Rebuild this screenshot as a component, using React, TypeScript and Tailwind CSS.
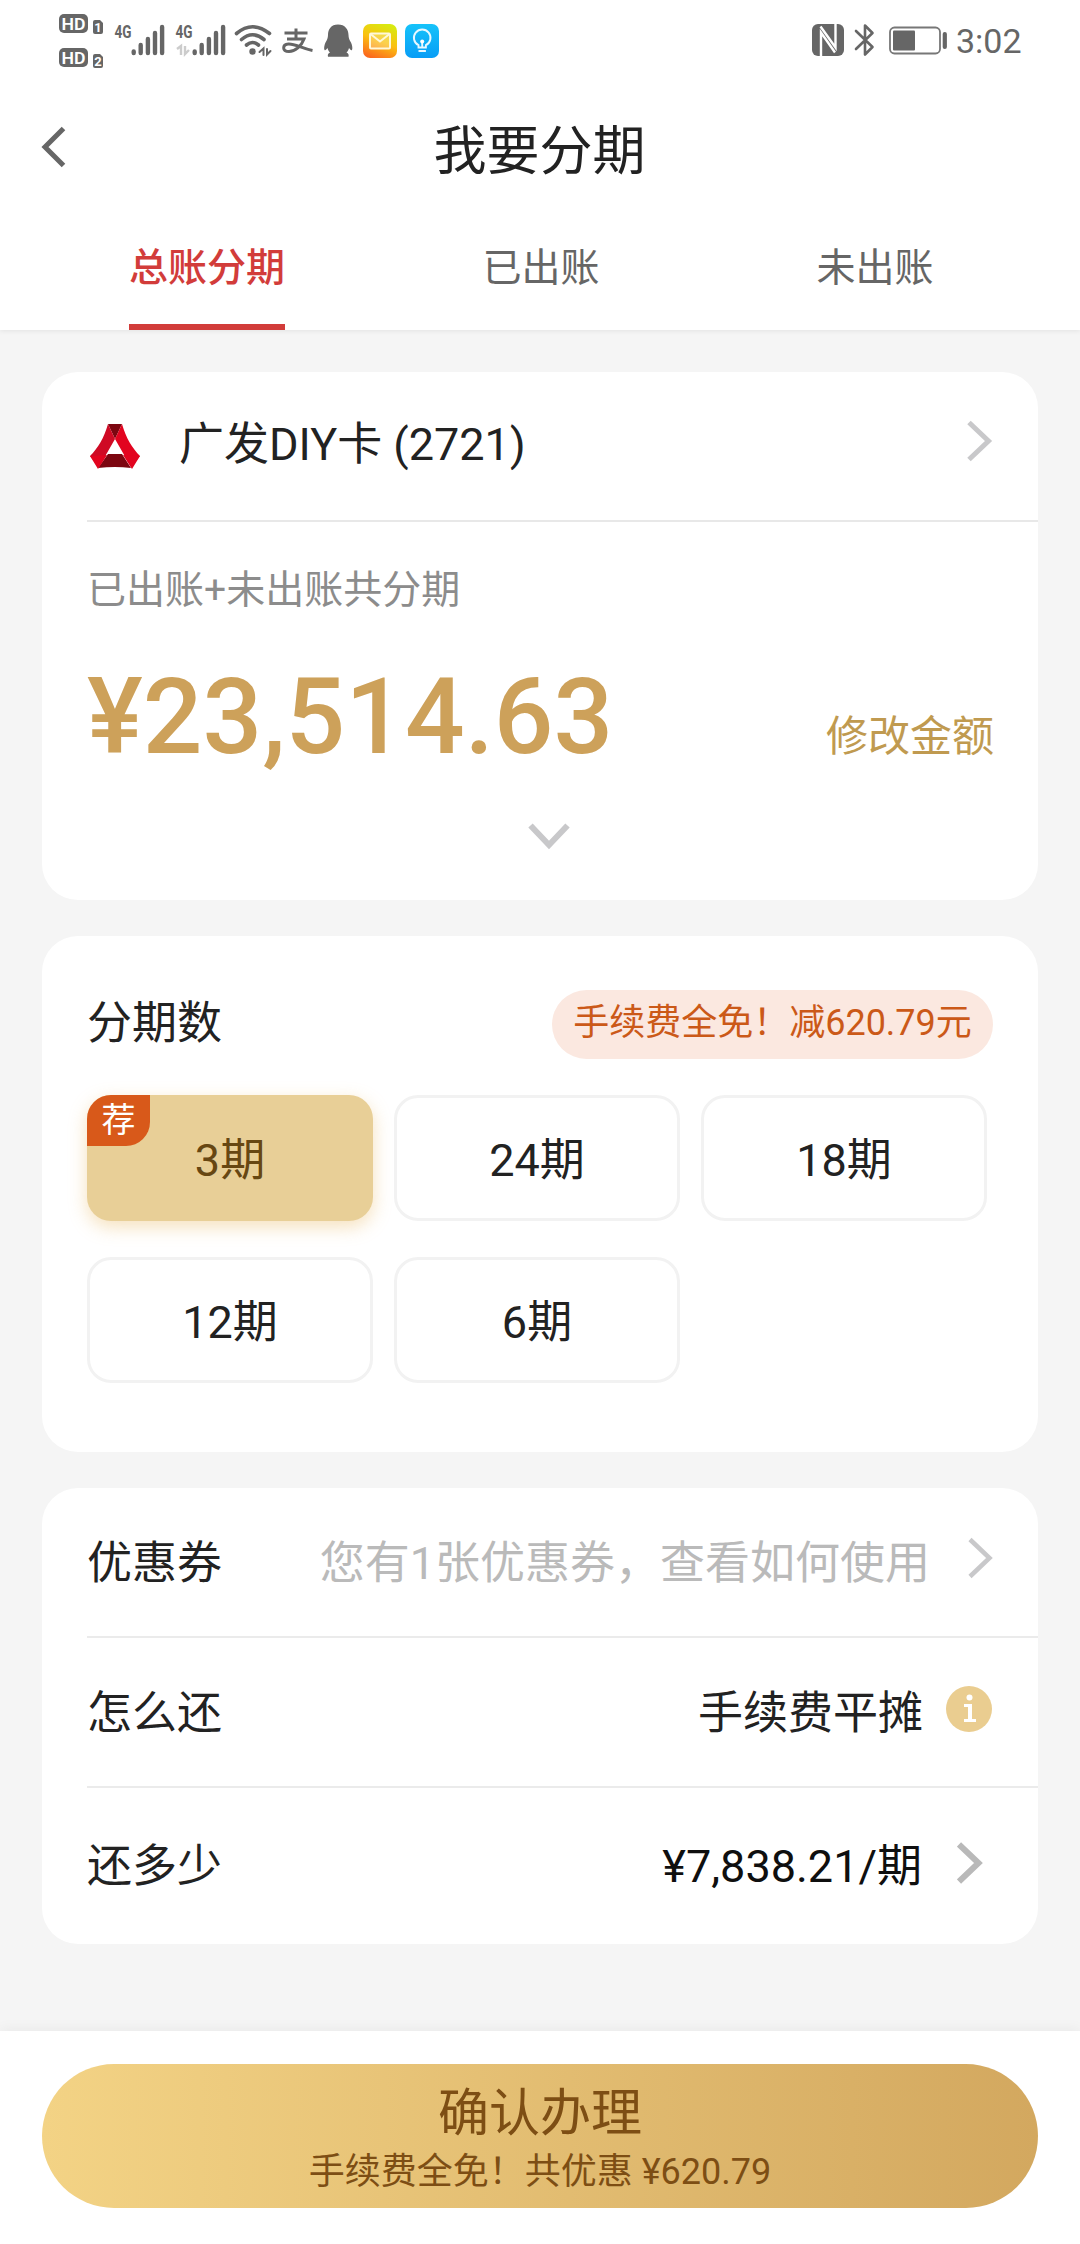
import React, { useState } from "react";

const tabs = ["总账分期", "已出账", "未出账"];
const periods = [3, 24, 18, 12, 6];

const Bars = ({ x }: any) => (
  <g stroke="#666" strokeWidth="4.4" strokeLinecap="round">
    <path d={`M${x} 51.500v1.500M${x + 7} 45v8M${x + 14.2} 39v14M${x + 21.3} 33v20M${x + 28.4} 27v26`} />
  </g>
);

const HdIcon = () => (
  <svg viewBox="56 0 54 80" className="w-[54px] h-20" fill="#666">
    {[14, 48].map((y, i) => (
      <g key={y}>
        <rect x="59" y={y} width="29" height="19" rx="5" />
        <text x="61.5" y={y + 15.8} fill="#fff" fontSize="17" fontWeight="600" textLength="24" lengthAdjust="spacingAndGlyphs">HD</text>
        <path d={`M93 ${y + 8}q0-2 2-2h5l3 3v9q0 2-2 2h-6q-2 0-2-2z`} />
        <text x="98" y={y + 18} fill="#fff" fontSize="13" fontWeight="700" textAnchor="middle">{i + 1}</text>
      </g>
    ))}
  </svg>
);

const SignalIcon = ({ data }: any) => (
  <svg viewBox="110 0 61 80" className="w-[61px] h-20" fill="#666">
    <text x="114.5" y="38" fontSize="19" fontWeight="700" textLength="17" lengthAdjust="spacingAndGlyphs">4G</text>
    {data && <path d="M116 49l4-3v9M124 46v8l4-4" fill="none" stroke="#ccc" strokeWidth="2.4" />}
    <Bars x={133.7} />
  </svg>
);

const WifiIcon = () => (
  <svg viewBox="232 0 44 80" className="w-11 h-20" fill="none" stroke="#666" strokeWidth="3.6" strokeLinecap="round">
    <path d="M236.500 33.500q16-13.500 33 0M241.500 39.500q11-9.500 22.500 0M246.500 45q6-5 12 0" />
    <circle cx="252.500" cy="51.500" r="3.200" fill="#666" stroke="none" />
    <path d="M259.500 52l4-3.500v6.500M267 49v5.500l3.500-3.500" strokeWidth="2" />
  </svg>
);

const AlipayIcon = () => (
  <svg viewBox="276 0 44 80" className="w-11 h-20" fill="none" stroke="#666" strokeWidth="3">
    <path d="M284.500 33h23M296 28.500v10M287 39h17c-2.500 7-9 12.500-15 12.500-7 0-7-7-.500-7.500 7-.3 13 4.500 24 6.500" />
  </svg>
);

const QqIcon = () => (
  <svg viewBox="320 0 40 80" className="w-10 h-20" fill="#666">
    <path d="M338 24.500c-7 0-10 5-10 10.500 0 3-1 5-2.500 7.500-1.200 2.500-1.800 6-1 7.500.8.700 2-.5 3-2 .5 2 1.500 3.500 2.500 4.500-2 1-2.500 2-2 4.300h20.500c.5-2.300 0-3.300-2-4.300 1-1 2-2.500 2.500-4.500 1 1.500 2.200 2.700 3 2 .8-1.500.2-5-1-7.500-1.500-2.500-2.500-4.500-2.500-7.500 0-5.500-3.500-10.500-10.500-10.500z" />
  </svg>
);

const MailIcon = () => (
  <svg viewBox="360 0 42 80" className="w-[42px] h-20">
    <defs>
      <linearGradient id="mail" x1=".7" y1="0" x2=".3" y2="1">
        <stop offset="0" stopColor="#d8ea10" />
        <stop offset=".5" stopColor="#fbc010" />
        <stop offset="1" stopColor="#fb6a1e" />
      </linearGradient>
    </defs>
    <rect x="363" y="24" width="34" height="34" rx="7" fill="url(#mail)" />
    <rect x="370" y="33.500" width="20" height="15" rx="1" fill="#fff" fillOpacity=".25" stroke="#fff8d8" strokeWidth="2" />
    <path d="M370.500 34l9.500 7.500 9.500-7.500" fill="none" stroke="#fff8d8" strokeWidth="2" />
  </svg>
);

const BulbIcon = () => (
  <svg viewBox="402 0 42 80" className="w-[42px] h-20" fill="none" stroke="#e8f8ff" strokeWidth="1.900">
    <defs>
      <linearGradient id="bulb" x1="0" y1="0" x2="0" y2="1">
        <stop offset="0" stopColor="#16c3fa" />
        <stop offset="1" stopColor="#089df6" />
      </linearGradient>
    </defs>
    <rect x="405" y="24" width="34" height="34" rx="7" fill="url(#bulb)" stroke="none" />
    <path d="M418.500 47.500v-2.300a8.300 8.300 0 1 1 7.400 0v2.300zM418.500 51h7.400M422.200 47v-5" />
    <circle cx="422.200" cy="41.500" r="2" fill="#fff" stroke="none" />
  </svg>
);

const StatusRight = () => (
  <svg viewBox="808 0 144 80" className="w-36 h-20" fill="#666">
    {/* nfc */}
    <rect x="812" y="24" width="32" height="32" rx="6" />
    <path d="M821 56V32.500l14 20M835.500 24v23.500l-15-21" fill="none" stroke="#fff" strokeWidth="2.400" />
    {/* bluetooth */}
    <path d="M856 31l16.500 16-7.500 7.500v-29l7.500 7.500L856 49" fill="none" stroke="#666" strokeWidth="2.600" strokeLinejoin="round" strokeLinecap="round" />
    {/* battery */}
    <rect x="890" y="27.500" width="50" height="26" rx="4.500" fill="none" stroke="#777" strokeWidth="1.800" />
    <rect x="893" y="30.500" width="22" height="20" rx="1" />
    <rect x="942.700" y="32" width="4.200" height="17" rx="2" />
  </svg>
);

const Arrow = ({ className, color = "#c8c8ca", width = 5 }: any) => (
  <svg viewBox="0 0 26 42" className={className} fill="none" stroke={color} strokeWidth={width}>
    <path d="M2 2.500L21.500 21 2 39.500" />
  </svg>
);

const Row = ({ label, children, last }: any) => (
  <div className={`flex items-center justify-between pr-[45px] ${last ? "h-[156px] pt-0.5" : "h-[150px] pt-1 border-b-2 border-[#ebebeb]"}`}>
    <div>{label}</div>
    <div className="flex items-center">{children}</div>
  </div>
);

const App = () => {
  const [tab, setTab] = useState(0);
  const [period, setPeriod] = useState(3);

  return (
    <div className="w-[1080px] h-[2244px] flex flex-col overflow-hidden bg-[#f5f5f5] text-[#222] text-[45px] leading-[60px] [font-family:Roboto,'Noto_Sans_CJK_SC',sans-serif]">
      <header className="h-[330px] bg-white shadow-[0_1px_5px_rgba(0,0,0,0.08)]">
        <div className="flex h-20 pl-14 pr-[58px]">
          <HdIcon />
          <SignalIcon />
          <SignalIcon data />
          <WifiIcon />
          <AlipayIcon />
          <QqIcon />
          <MailIcon />
          <BulbIcon />
          <div className="flex ml-auto">
            <StatusRight />
            <div className="w-[70px] pl-1 pt-[11px] text-[34px] text-[#666] whitespace-nowrap">3:02</div>
          </div>
        </div>
        <div className="flex items-center h-[140px] px-10">
          <svg viewBox="0 0 26 42" className="w-[26px] h-[42px] -mt-1.5" fill="none" stroke="#666" strokeWidth="5">
            <path d="M23.500 2.500L5 21l18.500 18.500" />
          </svg>
          <h1 className="flex-1 pt-[3px] pr-[27px] text-center text-[53px]">我要分期</h1>
        </div>
        <div className="flex h-[110px] pl-10 pr-[38px] text-[39px]">
          {tabs.map((t, i) => (
            <button key={t} onClick={() => setTab(i)} className="flex-1 flex justify-center">
              <span className={`h-full pt-[18px] ${tab === i ? "border-b-[6px] border-[#d23c3a] text-[#d23c3a] font-medium" : "text-[#666]"}`}>{t}</span>
            </button>
          ))}
        </div>
      </header>

      <main className="flex-1 px-[42px] pt-[42px]">
        <section className="h-[528px] pl-[45px] rounded-[36px] bg-white">
          <div className="flex items-center h-[150px] pr-[45px] border-b-2 border-[#e8e8e8]">
            <svg viewBox="0 0 50 45" className="w-[50px] h-[45px] ml-[3px]">
              <path d="M18 0h14L25 15z" fill="#7c0610" />
              <path d="M18 0l7 15-16 28L0 32C8 24 14 14 18 0z" fill="#cf0a24" />
              <path d="M32 0l-7 15 16 28 9-11C42 24 36 14 32 0z" fill="#e2041f" />
              <path d="M18 30h14l9 14q-16-2-33 0z" fill="#7c0610" />
              <path d="M0 32l17-1-9 14zM50 32l-17-1 9 14z" fill="#e2041f" />
              <path d="M25 17l7 13H18z" fill="#fff" />
            </svg>
            <div className="flex-1 ml-[39px] -mt-[3px]">广发DIY卡 (2721)</div>
            <Arrow className="w-[26px] h-[42px] -mt-2.5" />
          </div>
          <div className="pt-[38px] text-[39px] text-[#8c8c8c]">已出账+未出账共分期</div>
          <div className="flex items-end justify-between h-[158px] pr-11">
            <div className="text-[105px] leading-[120px] font-medium text-[#cda15a]">¥23,514.63</div>
            <div className="mb-[11px] text-[42px] text-[#c09a50]">修改金额</div>
          </div>
          <div className="flex justify-center pr-[27px] pt-[45px]">
            <svg viewBox="0 0 42 27" className="w-[42px] h-[27px]" fill="none" stroke="#c8c8ca" strokeWidth="6">
              <path d="M2.500 2.500L21 22 39.500 2.500" />
            </svg>
          </div>
        </section>

        <section className="h-[516px] mt-9 pt-[54px] px-[45px] rounded-[36px] bg-white">
          <div className="flex justify-between h-[69px]">
            <div className="pt-1">分期数</div>
            <div className="w-[441px] h-[69px] rounded-full bg-[#fbe8e0] text-center text-[36px] leading-[66px] text-[#cb5918] whitespace-nowrap">手续费全免！减620.79元</div>
          </div>
          <div className="grid grid-cols-3 gap-x-[21px] gap-y-9 w-[900px] mt-9">
            {periods.map((p) => (
              <button
                key={p}
                onClick={() => setPeriod(p)}
                className={`relative h-[126px] pt-1.5 rounded-3xl ${period === p ? "bg-[#e8cf97] text-[#674712] shadow-[0_6px_18px_rgba(232,180,90,0.4)]" : "border-[3px] border-[#f2f2f2]"}`}
              >
                {p}期
                {p === 3 && (
                  <span className="absolute left-0 top-0 w-[63px] h-[51px] rounded-tl-3xl rounded-br-3xl bg-[#d8591a] text-white text-[34px] leading-[51px]">荐</span>
                )}
              </button>
            ))}
          </div>
        </section>

        <section className="h-[456px] mt-9 pl-[45px] rounded-[36px] bg-white">
          <Row label="优惠券">
            <span className="text-[#bababa]">您有1张优惠券，查看如何使用</span>
            <Arrow className="w-[26px] h-[42px] ml-[38px] -mr-px -mt-3" width={4.5} />
          </Row>
          <Row label="怎么还">
            <span>手续费平摊</span>
            <svg viewBox="0 0 46 46" className="w-[46px] h-[46px] ml-[23px] mr-px -mt-2.5">
              <circle cx="23" cy="23" r="23" fill="#eacd90" />
              <circle cx="23.500" cy="11.500" r="3" fill="#fff" />
              <path d="M18 18h8v15h4v3H18v-3h4V21h-4z" fill="#fff" />
            </svg>
          </Row>
          <Row label="还多少" last>
            <span className="text-[#0f0f0f]">¥7,838.21/期</span>
            <Arrow className="w-[26px] h-[42px] ml-[35px] mr-2.5 -mt-2" color="#b9b9b9" width={6} />
          </Row>
        </section>
      </main>

      <footer className="h-[213px] px-[42px] pt-[33px] bg-white shadow-[0_-2px_12px_rgba(0,0,0,0.05)]">
        <button className="block w-full h-36 pt-3 rounded-full bg-gradient-to-r from-[#f3d385] to-[#d3a85f] text-[#7d4e14]">
          <div className="text-[51px] leading-[60px]">确认办理</div>
          <div className="text-[36px] leading-[57px]">手续费全免！共优惠 ¥620.79</div>
        </button>
      </footer>
    </div>
  );
};

export default App;
